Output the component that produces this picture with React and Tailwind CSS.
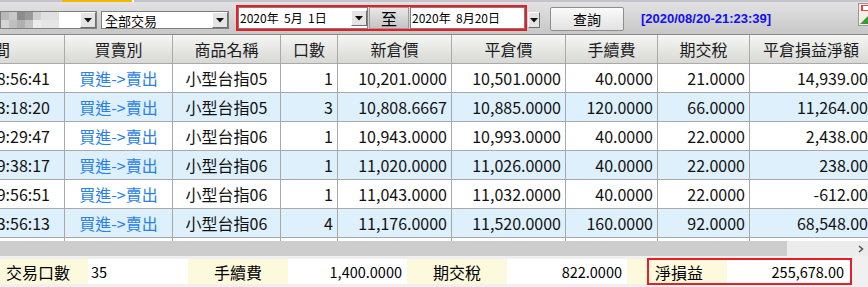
import React from 'react';

const cjk = "font-['Noto_Sans_CJK_TC','Noto_Sans',sans-serif]";

const rows = [
  { time: '2020/05/04 08:56:41', prod: '小型台指05', qty: '1', open: '10,201.0000', close: '10,501.0000', fee: '40.0000', tax: '21.0000', pl: '14,939.00' },
  { time: '2020/05/11 13:18:20', prod: '小型台指05', qty: '3', open: '10,808.6667', close: '10,885.0000', fee: '120.0000', tax: '66.0000', pl: '11,264.00' },
  { time: '2020/05/25 09:29:47', prod: '小型台指06', qty: '1', open: '10,943.0000', close: '10,993.0000', fee: '40.0000', tax: '22.0000', pl: '2,438.00' },
  { time: '2020/05/29 09:38:17', prod: '小型台指06', qty: '1', open: '11,020.0000', close: '11,026.0000', fee: '40.0000', tax: '22.0000', pl: '238.00' },
  { time: '2020/06/02 09:56:51', prod: '小型台指06', qty: '1', open: '11,043.0000', close: '11,032.0000', fee: '40.0000', tax: '22.0000', pl: '-612.00' },
  { time: '2020/06/17 13:56:13', prod: '小型台指06', qty: '4', open: '11,176.0000', close: '11,520.0000', fee: '160.0000', tax: '92.0000', pl: '68,548.00' },
];

// column widths incl. right border line
const W = ['w-[65px]', 'w-[108px]', 'w-[108px]', 'w-[57px]', 'w-[114px]', 'w-[114px]', 'w-[92px]', 'w-[92px]', 'w-[122px]'];

const DropBtn = ({ className = '' }) => (
  <div className={`flex items-center justify-center bg-[#e4e4e4] border border-t-white border-l-white border-b-[#6e6e6e] border-r-[#6e6e6e] ${className}`}>
    <svg width="8" height="5" viewBox="0 0 8 5"><path d="M0 0h8L4 4.5z" fill="#111" /></svg>
  </div>
);

const Censor = () => (
  <svg width="58" height="16" viewBox="0 0 58 16" className="shrink-0">
    <rect x="0" y="0" width="58" height="16" fill="#e6e6e6" />
    <rect x="0" y="0" width="8" height="8" fill="#b8b8b8" />
    <rect x="8" y="0" width="8" height="8" fill="#c8c8c8" />
    <rect x="16" y="0" width="8" height="8" fill="#8c8c8c" />
    <rect x="24" y="0" width="8" height="8" fill="#9a9a9a" />
    <rect x="32" y="0" width="8" height="8" fill="#d0d0d0" />
    <rect x="40" y="0" width="18" height="8" fill="#e0e0e0" />
    <rect x="0" y="8" width="8" height="8" fill="#d4d4d4" />
    <rect x="8" y="8" width="8" height="8" fill="#c0c0c0" />
    <rect x="16" y="8" width="8" height="8" fill="#b0b0b0" />
    <rect x="24" y="8" width="8" height="8" fill="#c4c4c4" />
    <rect x="32" y="8" width="8" height="8" fill="#ececec" />
  </svg>
);

const Cell = ({ i, children, align = 'end', className = '' }) => (
  <div className={`${W[i]} shrink-0 h-full flex items-center border-r border-[#a9a9a9] ${align === 'center' ? 'justify-center' : 'justify-end pr-[4px]'} ${className}`}>
    {children}
  </div>
);

export default function App() {
  return (
    <div className={`w-[868px] h-[287px] overflow-hidden bg-[#f0f0f0] ${cjk}`}>
      {/* toolbar */}
      <div className="h-[35px] border-b border-[#8a8a8a] bg-gradient-to-b from-[#e4e4e6] to-[#c7c7c7] flex flex-col">
        <div className="h-[2px] flex bg-[#c4c4cc]">
          <div className="w-[62px]" />
          <div className="w-[70px] bg-[#f2b705]" />
          <div className="w-[2px] bg-white" />
        </div>
        <div className="relative flex items-start">
          {/* combo 1 */}
          <div className="mt-[9px] w-[97px] h-[18px] bg-white border border-[#7f7f7f] flex items-center">
            <Censor />
            <div className="flex-1" />
            <DropBtn className="w-[16px] h-[16px]" />
          </div>
          {/* combo 2 */}
          <div className="mt-[9px] ml-[4px] w-[128px] h-[18px] bg-white border border-[#7f7f7f] flex items-center">
            <span className="pl-[3px] text-[13px] leading-none text-black">全部交易</span>
            <div className="flex-1" />
            <DropBtn className="w-[16px] h-[16px]" />
          </div>
          {/* date range */}
          <div className="mt-[3px] ml-[7px] w-[291px] h-[26px] border-2 border-[#ec1c24] flex items-center">
            <div className="w-[130px] h-full bg-white border border-[#7f7f7f] flex items-center">
              <span className="pl-[1px] text-[12px] leading-none text-black whitespace-pre">2020年  5月  1日</span>
              <div className="flex-1" />
              <DropBtn className="w-[16px] h-[16px]" />
            </div>
            <div className="ml-[1px] w-[40px] h-full bg-gradient-to-b from-[#e8e8e8] to-[#c4c4c4] border border-[#9a9a9a] flex items-center justify-center text-[16px] text-black">至</div>
            <div className="ml-[1px] flex-1 h-full bg-white border border-[#7f7f7f] flex items-center">
              <span className="pl-[1px] text-[12px] leading-none text-black whitespace-pre">2020年  8月20日</span>
            </div>
          </div>
          <DropBtn className="mt-[10px] ml-[1px] w-[12px] h-[16px]" />
          <div className="mt-[5px] ml-[10px] w-[74px] h-[24px] rounded-[2px] border border-[#8e8e8e] bg-gradient-to-b from-[#fbfbfb] to-[#e2e2e2] flex items-center justify-center text-[14px] text-black">查詢</div>
          <div className="mt-[8px] ml-[17px] font-['Liberation_Sans',sans-serif] font-bold text-[13px] text-[#1010f0] leading-[18px]">[2020/08/20-21:23:39]</div>
          <div className="ml-auto mt-[1px] w-[10px] h-[24px] overflow-hidden">
            <svg width="24" height="24" viewBox="0 0 24 24">
              <rect x="0.5" y="0.5" width="22" height="22" fill="#f3efe4" stroke="#9a9a9a" />
              <rect x="3" y="2" width="10" height="6" fill="#e04848" />
              <rect x="5" y="3" width="5" height="4" fill="#fff" />
              <path d="M2 21l8-8 8 8z" fill="#3a9a3a" />
            </svg>
          </div>
        </div>
      </div>

      {/* header */}
      <div className="h-[29px] flex border-b border-[#a9a9a9] bg-gradient-to-b from-[#f6f6f4] to-[#d8d8d4] text-[16px] text-[#1c1c24] overflow-hidden">
        <div className={`${W[0]} shrink-0 h-full flex items-center justify-end pr-[54px] border-r border-[#a9a9a9] overflow-hidden whitespace-nowrap`}>成交時間</div>
        <Cell i={1} align="center">買賣別</Cell>
        <Cell i={2} align="center">商品名稱</Cell>
        <Cell i={3} align="center">口數</Cell>
        <Cell i={4} align="center">新倉價</Cell>
        <Cell i={5} align="center">平倉價</Cell>
        <Cell i={6} align="center">手續費</Cell>
        <Cell i={7} align="center">期交稅</Cell>
        <Cell i={8} align="center" className="border-r-0">平倉損益淨額</Cell>
      </div>

      {/* rows */}
      {rows.map((r, k) => (
        <div key={k} className={`h-[29px] flex border-b border-[#a9a9a9] text-[16px] text-[#111] ${k % 2 ? 'bg-[#ddf0fb]' : 'bg-white'}`}>
          <div className={`${W[0]} shrink-0 h-full flex items-center justify-end pr-[14px] border-r border-[#a9a9a9] overflow-hidden whitespace-nowrap`}>{r.time}</div>
          <Cell i={1} align="center"><span className="text-[#2b7fe6]">買進-&gt;賣出</span></Cell>
          <Cell i={2} align="center">{r.prod}</Cell>
          <Cell i={3}>{r.qty}</Cell>
          <Cell i={4}>{r.open}</Cell>
          <Cell i={5}>{r.close}</Cell>
          <Cell i={6}>{r.fee}</Cell>
          <Cell i={7}>{r.tax}</Cell>
          <Cell i={8} className="border-r-0">{r.pl}</Cell>
        </div>
      ))}
      <div className="h-[3px] flex bg-white">
        {W.slice(0, 8).map((w, i) => (
          <div key={i} className={`${w} shrink-0 h-full border-r border-[#a9a9a9]`} />
        ))}
      </div>

      {/* horizontal scrollbar */}
      <div className="h-[15px] flex bg-[#ececec]">
        <div className="w-[787px] h-full bg-[#cdcdcd]" />
        <div className="flex-1 flex items-center justify-end pr-[4px]">
          <svg width="6" height="8" viewBox="0 0 6 8"><path d="M1 1l3.5 3L1 7" fill="none" stroke="#555" strokeWidth="1.6" /></svg>
        </div>
      </div>

      {/* summary */}
      <div className="h-[31px] pt-[3px] flex items-start text-black">
        <div className="w-[88px] h-[25px] bg-[#fdf9dc] flex items-center pl-[6px] text-[16px]">交易口數</div>
        <div className="w-[100px] h-[25px] bg-white flex items-center pl-[3px] text-[14.5px]">35</div>
        <div className="w-[100px] h-[25px] bg-[#fdf9dc] flex items-center justify-center text-[16px]">手續費</div>
        <div className="w-[119px] h-[25px] bg-white flex items-center justify-end pr-[5px] text-[14.5px]">1,400.0000</div>
        <div className="w-[100px] h-[25px] bg-[#fdf9dc] flex items-center justify-center text-[16px]">期交稅</div>
        <div className="w-[120px] h-[25px] bg-white flex items-center justify-end pr-[5px] text-[14.5px]">822.0000</div>
        <div className="w-[20px] h-[25px] bg-[#fdf9dc]" />
        <div className="w-[205px] h-[27px] -mt-[1px] border-2 border-[#ec1c24] flex">
          <div className="w-[78px] h-full bg-[#fdf9dc] flex items-center pl-[6px] text-[16px]">淨損益</div>
          <div className="flex-1 h-full bg-white flex items-center justify-end pr-[6px] text-[14.5px]">255,678.00</div>
        </div>
      </div>
    </div>
  );
}
